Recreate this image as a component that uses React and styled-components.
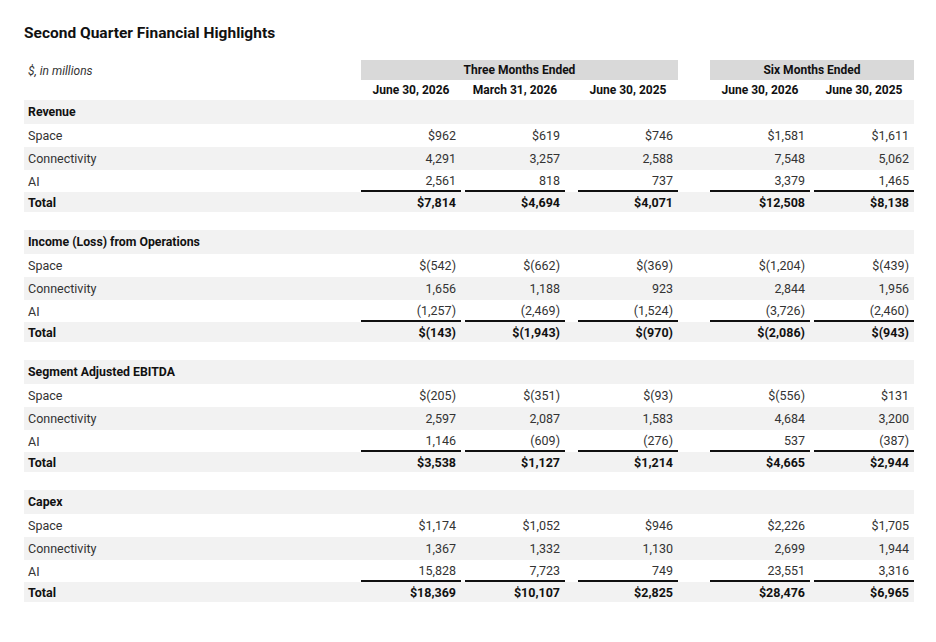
import React from 'react'
import styled, { createGlobalStyle } from 'styled-components'

const GlobalStyle = createGlobalStyle`
  body {
    margin: 0;
    background: #fff;
    font-family: Roboto, "Liberation Sans", sans-serif;
    color: #1f1f1f;
  }
`

const sections = [
  {
    title: 'Revenue',
    rows: [
      ['Space', '$962', '$619', '$746', '$1,581', '$1,611'],
      ['Connectivity', '4,291', '3,257', '2,588', '7,548', '5,062'],
      ['AI', '2,561', '818', '737', '3,379', '1,465'],
    ],
    total: ['$7,814', '$4,694', '$4,071', '$12,508', '$8,138'],
  },
  {
    title: 'Income (Loss) from Operations',
    rows: [
      ['Space', '$(542)', '$(662)', '$(369)', '$(1,204)', '$(439)'],
      ['Connectivity', '1,656', '1,188', '923', '2,844', '1,956'],
      ['AI', '(1,257)', '(2,469)', '(1,524)', '(3,726)', '(2,460)'],
    ],
    total: ['$(143)', '$(1,943)', '$(970)', '$(2,086)', '$(943)'],
  },
  {
    title: 'Segment Adjusted EBITDA',
    rows: [
      ['Space', '$(205)', '$(351)', '$(93)', '$(556)', '$131'],
      ['Connectivity', '2,597', '2,087', '1,583', '4,684', '3,200'],
      ['AI', '1,146', '(609)', '(276)', '537', '(387)'],
    ],
    total: ['$3,538', '$1,127', '$1,214', '$4,665', '$2,944'],
  },
  {
    title: 'Capex',
    rows: [
      ['Space', '$1,174', '$1,052', '$946', '$2,226', '$1,705'],
      ['Connectivity', '1,367', '1,332', '1,130', '2,699', '1,944'],
      ['AI', '15,828', '7,723', '749', '23,551', '3,316'],
    ],
    total: ['$18,369', '$10,107', '$2,825', '$28,476', '$6,965'],
  },
]

const dates = ['June 30, 2026', 'March 31, 2026', 'June 30, 2025', 'June 30, 2026', 'June 30, 2025']
const valueCols = [2, 4, 6, 8, 10]

const App = () => {
  return (
    <Page>
      <GlobalStyle />
      <Title>Second Quarter Financial Highlights</Title>
      <Table>
        <Row $h={20}>
          <Units>$, in millions</Units>
          <Band $from={2} $to={7}>Three Months Ended</Band>
          <Band $from={8} $to={11}>Six Months Ended</Band>
        </Row>
        <Row $h={20}>
          {dates.map((d, i) => (
            <DateHead key={i} $col={valueCols[i]}>{d}</DateHead>
          ))}
        </Row>
        {sections.map((s, si) => (
          <Section key={s.title} $first={si === 0}>
            <Row $h={24} $shade>
              <SectionLabel>{s.title}</SectionLabel>
            </Row>
            {s.rows.map((r, ri) => {
              const last = ri === s.rows.length - 1
              return (
                <Row key={r[0]} $h={last ? 22 : 23} $shade={ri % 2 === 1}>
                  <Label>{r[0]}</Label>
                  {r.slice(1).map((v, vi) => (
                    <Value key={vi} $col={valueCols[vi]} $rule={last}>{v}</Value>
                  ))}
                </Row>
              )
            })}
            <Row $h={20} $shade>
              <Label $bold>Total</Label>
              {s.total.map((v, vi) => (
                <Value key={vi} $col={valueCols[vi]} $bold>{v}</Value>
              ))}
            </Row>
          </Section>
        ))}
      </Table>
    </Page>
  )
}

const Page = styled.div`
  padding: 24px 22px 24px 24px;
`

const Title = styled.h1`
  margin: 0 0 18px;
  font-size: 15.5px;
  line-height: 18px;
  font-weight: 700;
  color: #111;
`

const Table = styled.div`
  width: 890px;
  display: flex;
  flex-direction: column;
`

const Section = styled.div`
  display: flex;
  flex-direction: column;
  margin-top: ${p => (p.$first ? '0' : '18px')};
`

const Row = styled.div`
  display: grid;
  grid-template-columns: 337px 100px 4px 100px 13px 100px 32px 100px 4px 100px;
  height: ${p => p.$h}px;
  background: ${p => (p.$shade ? '#f2f2f2' : '#fff')};
`

const Units = styled.div`
  grid-column: 1;
  padding-left: 4px;
  font-size: 12px;
  font-style: italic;
  line-height: 22px;
  color: #333;
`

const Band = styled.div`
  grid-column: ${p => p.$from} / ${p => p.$to};
  background: #d9d9d9;
  border-bottom: 2px solid #111;
  text-align: center;
  font-size: 12px;
  font-weight: 700;
  line-height: 20px;
  color: #111;
`

const DateHead = styled.div`
  grid-column: ${p => p.$col};
  border-bottom: 2px solid #111;
  text-align: center;
  font-size: 12px;
  font-weight: 700;
  line-height: 20px;
  color: #111;
`

const SectionLabel = styled.div`
  grid-column: 1;
  padding-left: 4px;
  align-self: center;
  font-size: 12.3px;
  font-weight: 700;
  color: #111;
`

const Label = styled.div`
  grid-column: 1;
  padding-left: 4px;
  align-self: center;
  font-size: 12.5px;
  font-weight: ${p => (p.$bold ? 700 : 400)};
  color: ${p => (p.$bold ? '#111' : '#333')};
`

const Value = styled.div`
  grid-column: ${p => p.$col};
  display: flex;
  align-items: center;
  justify-content: flex-end;
  padding-right: 5px;
  font-size: 12.5px;
  font-weight: ${p => (p.$bold ? 700 : 400)};
  color: ${p => (p.$bold ? '#111' : '#333')};
  border-bottom: ${p => (p.$rule ? '2px solid #111' : 'none')};
`

export default App
